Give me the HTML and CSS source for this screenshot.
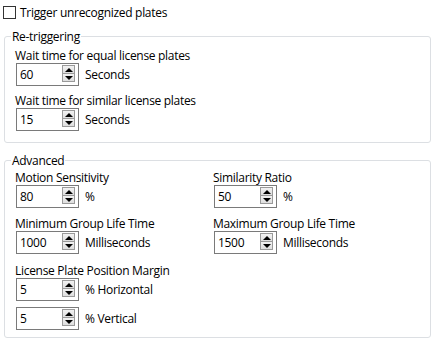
FILE: index.html
```html
<!DOCTYPE html>
<html>
<head>
<meta charset="utf-8">
<link rel="stylesheet" href="styles.css">
</head>
<body>
<div class="page">
  <label class="check-row"><span class="checkbox"></span><span>Trigger unrecognized plates</span></label>

  <fieldset class="group group-retrigger">
    <legend>Re-triggering</legend>
    <div class="items">
      <div class="item">
        <div class="label">Wait time for equal license plates</div>
        <div class="spin-row">
          <div class="spin"><span class="value">60</span><span class="buttons"><span class="btn up"></span><span class="btn down"></span></span></div>
          <span class="unit">Seconds</span>
        </div>
      </div>
      <div class="item">
        <div class="label">Wait time for similar license plates</div>
        <div class="spin-row">
          <div class="spin"><span class="value">15</span><span class="buttons"><span class="btn up"></span><span class="btn down"></span></span></div>
          <span class="unit">Seconds</span>
        </div>
      </div>
    </div>
  </fieldset>

  <fieldset class="group group-advanced">
    <legend>Advanced</legend>
    <div class="grid">
      <div class="item">
        <div class="label">Motion Sensitivity</div>
        <div class="spin-row">
          <div class="spin"><span class="value">80</span><span class="buttons"><span class="btn up"></span><span class="btn down"></span></span></div>
          <span class="unit">%</span>
        </div>
      </div>
      <div class="item">
        <div class="label">Similarity Ratio</div>
        <div class="spin-row">
          <div class="spin"><span class="value">50</span><span class="buttons"><span class="btn up"></span><span class="btn down"></span></span></div>
          <span class="unit">%</span>
        </div>
      </div>
      <div class="item">
        <div class="label">Minimum Group Life Time</div>
        <div class="spin-row">
          <div class="spin"><span class="value">1000</span><span class="buttons"><span class="btn up"></span><span class="btn down"></span></span></div>
          <span class="unit">Milliseconds</span>
        </div>
      </div>
      <div class="item">
        <div class="label">Maximum Group Life Time</div>
        <div class="spin-row">
          <div class="spin"><span class="value">1500</span><span class="buttons"><span class="btn up"></span><span class="btn down"></span></span></div>
          <span class="unit">Milliseconds</span>
        </div>
      </div>
      <div class="item item-wide">
        <div class="label">License Plate Position Margin</div>
        <div class="spin-row">
          <div class="spin"><span class="value">5</span><span class="buttons"><span class="btn up"></span><span class="btn down"></span></span></div>
          <span class="unit">% Horizontal</span>
        </div>
        <div class="spin-row spin-row-extra">
          <div class="spin"><span class="value">5</span><span class="buttons"><span class="btn up"></span><span class="btn down"></span></span></div>
          <span class="unit">% Vertical</span>
        </div>
      </div>
    </div>
  </fieldset>
</div>
</body>
</html>
```

FILE: styles.css
```css
html, body {
  margin: 0;
  padding: 0;
  background: #ffffff;
}

body {
  width: 440px;
  height: 347px;
  overflow: hidden;
  font-family: "Open Sans", Lato, sans-serif;
  font-size: 12px;
  letter-spacing: -0.3px;
  color: #000000;
}

.page {
  display: flex;
  flex-direction: column;
  padding: 6px 0 0 4px;
}

.check-row {
  display: flex;
  align-items: center;
  gap: 4px;
  height: 13px;
  margin-left: -1px;
  line-height: 15px;
}

.checkbox {
  width: 11px;
  height: 11px;
  border: 1px solid #333333;
  background: #ffffff;
  flex: none;
}

.group {
  width: 427px;
  box-sizing: border-box;
  margin: 0;
  border: 1px solid #dcdfe3;
  border-radius: 3px;
  padding: 0 10px 0 10px;
}

.group legend {
  padding: 0 1px;
  margin-left: -4px;
  line-height: 15px;
}

.group-retrigger {
  margin-top: 10px;
  padding-top: 4px;
  padding-bottom: 11px;
}

.group-advanced {
  margin-top: 10px;
  padding-top: 2px;
  padding-bottom: 7px;
}

.items {
  display: flex;
  flex-direction: column;
  gap: 7px;
}

.grid {
  display: grid;
  grid-template-columns: 198px 1fr;
  row-gap: 8px;
}

.item-wide {
  grid-column: 1 / 3;
  margin-top: 1px;
}

.label {
  line-height: 15px;
  height: 15px;
}

.spin-row {
  display: flex;
  align-items: center;
  gap: 6px;
  margin-left: 1px;
}

.spin-row-extra {
  margin-top: 6px;
}

.spin {
  position: relative;
  width: 63px;
  height: 23px;
  box-sizing: border-box;
  border: 1px solid #7a7a7a;
  background: #ffffff;
  display: flex;
  align-items: center;
  flex: none;
}

.value {
  padding-left: 3px;
  line-height: 15px;
}

.buttons {
  position: absolute;
  right: 3px;
  top: 1px;
  width: 13px;
  display: flex;
  flex-direction: column;
}

.btn {
  position: relative;
  height: 9px;
  box-sizing: border-box;
  border: 1px solid #9a9a9a;
  background: linear-gradient(#f2f2f2, #dedede);
}

.btn.down {
  margin-top: -1px;
}

.btn::after {
  content: "";
  position: absolute;
  left: 50%;
  top: 50%;
  width: 0;
  height: 0;
  margin-left: -4px;
  border-left: 4px solid transparent;
  border-right: 4px solid transparent;
}

.btn.up::after {
  margin-top: -2px;
  border-bottom: 4px solid #000000;
}

.btn.down::after {
  margin-top: -2px;
  border-top: 4px solid #000000;
}

.unit {
  line-height: 15px;
}
```
